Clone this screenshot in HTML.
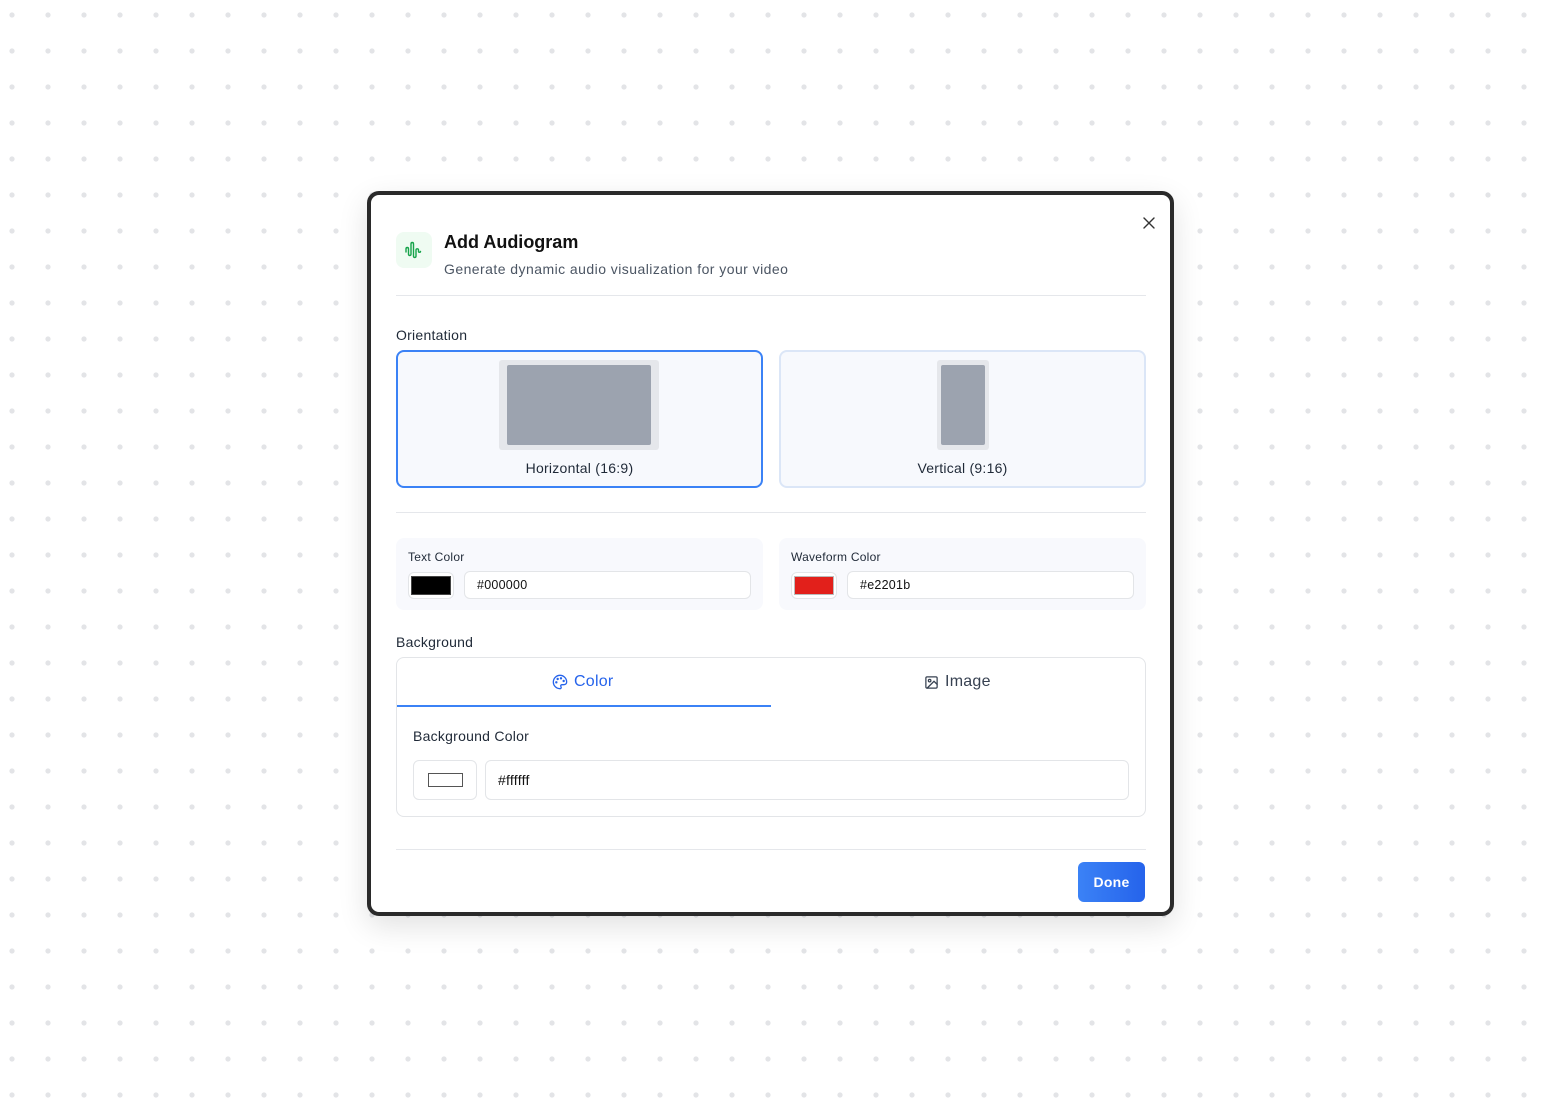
<!DOCTYPE html>
<html><head><meta charset="utf-8"><style>
*{box-sizing:border-box;margin:0;padding:0}
body{width:1541px;height:1107px;overflow:hidden;font-family:"Liberation Sans",sans-serif;background:#fff;letter-spacing:.25px;
background-image:radial-gradient(circle,#e3e4e7 2.4px,transparent 2.8px);background-size:36px 36px;background-position:-6px -3px;position:relative}
.modal{position:absolute;left:367px;top:191px;width:807px;height:725px;background:#fff;border:4px solid #2a2a2a;border-radius:12px;box-shadow:0 10px 30px rgba(0,0,0,.12)}
.abs{position:absolute}
.t{color:#1f2937}
.card{position:absolute;top:155px;width:367px;height:138px;border-radius:8px;background:#f7f9fd}
.inp{position:absolute;background:#fff;border:1px solid #e3e5e8;border-radius:6px}
</style></head><body>
<div class="modal">
 <svg class="abs" style="left:772px;top:22px" width="12" height="12" viewBox="0 0 12 12"><path d="M1 1L11 11M11 1L1 11" stroke="#333" stroke-width="1.4" stroke-linecap="round"/></svg>
 <div class="abs" style="left:25px;top:37px;width:36px;height:36px;border-radius:8px;background:#effbf2">
  <svg width="36" height="36" viewBox="0 0 36 36"><path d="M10 20v-3c0-2 2.5-2 2.5 0v5c0 2 2.5 2 2.5 0V12c0-2 2.5-2 2.5 0v12c0 2 2.5 2 2.5 0v-6c0-1.6 2.5-1.6 2.5 0v1.5c0 1 2 1 2 0" fill="none" stroke="#16a34a" stroke-width="1.4" stroke-linecap="round" stroke-linejoin="round"/></svg>
 </div>
 <div class="abs" style="left:73px;top:37px;font-size:18px;font-weight:bold;color:#111;letter-spacing:0">Add Audiogram</div>
 <div class="abs" style="left:73px;top:66px;font-size:14px;color:#4b5563;letter-spacing:.45px">Generate dynamic audio visualization for your video</div>
 <div class="abs" style="left:25px;top:100px;width:750px;height:1px;background:#e5e7eb"></div>
 <div class="abs t" style="left:25px;top:132px;font-size:14px">Orientation</div>
 <div class="card" style="left:25px;border:2px solid #3b82f6">
  <div class="abs" style="left:101px;top:8px;width:160px;height:90px;background:#e5e7eb;border-radius:3px"><div class="abs" style="left:8px;top:5px;width:144px;height:80px;background:#9ca3af;border-radius:2px"></div></div>
  <div class="abs t" style="left:0;width:363px;top:108px;text-align:center;font-size:14px">Horizontal (16:9)</div>
 </div>
 <div class="card" style="left:408px;border:2px solid #dbe6f7">
  <div class="abs" style="left:156px;top:8px;width:52px;height:90px;background:#e5e7eb;border-radius:3px"><div class="abs" style="left:4px;top:5px;width:44px;height:80px;background:#9ca3af;border-radius:2px"></div></div>
  <div class="abs t" style="left:0;width:363px;top:108px;text-align:center;font-size:14px">Vertical (9:16)</div>
 </div>
 <div class="abs" style="left:25px;top:317px;width:750px;height:1px;background:#e5e7eb"></div>
 <div class="abs" style="left:25px;top:343px;width:367px;height:72px;background:#f8f9fd;border-radius:8px">
  <div class="abs t" style="left:12px;top:12px;font-size:12px">Text Color</div>
  <div class="inp" style="left:12px;top:34px;width:46px;height:27px"><div class="abs" style="left:2px;top:3px;width:40px;height:19px;background:#000;border:1px solid #444"></div></div>
  <div class="inp" style="left:68px;top:33px;width:287px;height:28px;font-size:12.5px;padding:6px 12px;color:#111">#000000</div>
 </div>
 <div class="abs" style="left:408px;top:343px;width:367px;height:72px;background:#f8f9fd;border-radius:8px">
  <div class="abs t" style="left:12px;top:12px;font-size:12px">Waveform Color</div>
  <div class="inp" style="left:12px;top:34px;width:46px;height:27px"><div class="abs" style="left:2px;top:3px;width:40px;height:19px;background:#e2201b;border:1px solid #bbb"></div></div>
  <div class="inp" style="left:68px;top:33px;width:287px;height:28px;font-size:12.5px;padding:6px 12px;color:#111">#e2201b</div>
 </div>
 <div class="abs t" style="left:25px;top:439px;font-size:14px">Background</div>
 <div class="abs" style="left:25px;top:462px;width:750px;height:160px;border:1px solid #e3e5e8;border-radius:8px">
  <div class="abs" style="left:0;top:47px;width:374px;height:2px;background:#3b82f6"></div>
  <div class="abs" style="left:155px;top:15px;font-size:16px;color:#2563eb;display:flex;align-items:center;gap:6px">
   <svg width="16" height="16" viewBox="0 0 24 24" fill="none" stroke="#2563eb" stroke-width="2" stroke-linecap="round"><path d="M12 22a10 10 0 1 1 10-10c0 2.5-2 4-4.5 4H15a2 2 0 0 0-1.5 3.3A1.7 1.7 0 0 1 12 22z"/><circle cx="13.5" cy="6.5" r=".8" fill="#2563eb"/><circle cx="17.5" cy="10.5" r=".8" fill="#2563eb"/><circle cx="8.5" cy="7.5" r=".8" fill="#2563eb"/><circle cx="6.5" cy="12.5" r=".8" fill="#2563eb"/></svg>Color</div>
  <div class="abs" style="left:527px;top:15px;font-size:16px;color:#374151;display:flex;align-items:center;gap:6px">
   <svg width="15" height="15" viewBox="0 0 24 24" fill="none" stroke="#374151" stroke-width="2" stroke-linecap="round"><rect x="3" y="3" width="18" height="18" rx="2"/><circle cx="9" cy="9" r="2"/><path d="M21 15l-5-5L5 21"/></svg>Image</div>
  <div class="abs t" style="left:16px;top:70px;font-size:14px">Background Color</div>
  <div class="inp" style="left:16px;top:102px;width:64px;height:40px;border-radius:6px"><div class="abs" style="left:14px;top:12px;width:35px;height:14px;border:1px solid #555;background:#fff"></div></div>
  <div class="inp" style="left:88px;top:102px;width:644px;height:40px;font-size:14px;padding:11px 12px;color:#111">#ffffff</div>
 </div>
 <div class="abs" style="left:25px;top:654px;width:750px;height:1px;background:#e5e7eb"></div>
 <div class="abs" style="left:707px;top:667px;width:67px;height:40px;border-radius:6px;background:linear-gradient(90deg,#3b82f6,#2563eb);color:#fff;font-size:14px;font-weight:bold;text-align:center;line-height:40px">Done</div>
</div>
</body></html>
